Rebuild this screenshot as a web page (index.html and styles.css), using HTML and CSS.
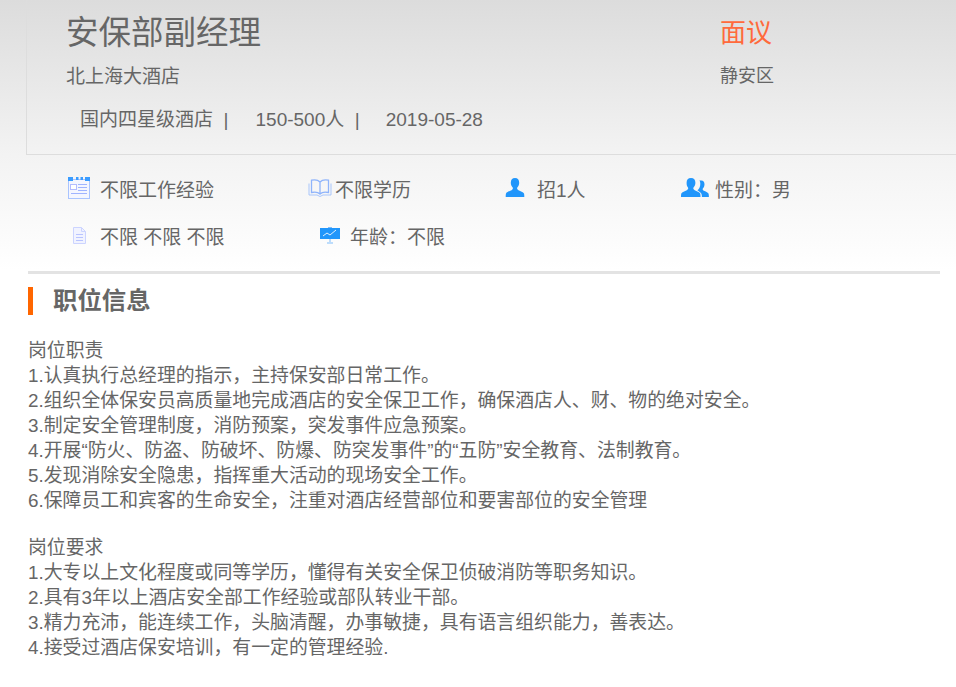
FILE: index.html
```html
<!DOCTYPE html>
<html lang="zh-CN">
<head>
<meta charset="utf-8">
<title>安保部副经理</title>
<link rel="stylesheet" href="styles.css">
</head>
<body>
<div class="page">
  <header class="head">
    <div class="head-main">
      <h1 class="title">安保部副经理</h1>
      <div class="company">北上海大酒店</div>
      <div class="meta"><span class="meta-a">国内四星级酒店&nbsp; |</span><span class="meta-b">150-500人&nbsp; |</span><span class="meta-c">2019-05-28</span></div>
    </div>
    <div class="head-side">
      <div class="salary">面议</div>
      <div class="area">静安区</div>
    </div>
  </header>
  <section class="facts">
    <div class="fact-row first">
      <div class="fact f1">
        <svg class="ic" width="24" height="24" viewBox="0 0 24 24"><rect x="1.500" y="3.500" width="21" height="19" fill="#f4f6ff" stroke="#a9c4ff"/><path d="M1 1h5v4H1zM9 1h2.500v3H9zM13.500 1H16v3h-2.500zM18 1h5v4h-5z" fill="#3a9cff"/><rect x="3.500" y="8.500" width="6" height="5" fill="#fff" stroke="#b4bcff"/><path d="M11 8.500h9M11 11.500h9M11 14.500h9M4 17.500h16" stroke="#9fb4ff" fill="none"/></svg>
        <span class="t1">不限工作经验</span>
      </div>
      <div class="fact f2">
        <svg class="ic" width="24" height="20" viewBox="0 0 24 20"><path d="M12 4C10 1.800 6.500 1.500 3.500 2.200V14.500c3-.7 6.500-.5 8.500 1.500 2-2 5.500-2.200 8.500-1.500V2.200C17.500 1.500 14 1.800 12 4zM12 4v12" fill="none" stroke="#8fb4fb" stroke-width="1.300"/><path d="M1 5.500v11.500h8l3 1.500 3-1.500h8V5.500" fill="none" stroke="#a9c6fb"/></svg>
        <span class="t2">不限学历</span>
      </div>
      <div class="fact f3">
        <svg class="ic" width="20" height="20" viewBox="0 0 20 20"><path d="M10 0c2.800 0 4.200 2 4.200 4.800 0 2-.8 3.600-1.900 4.800-.5 1 0 2 1.200 2.600 2 .8 4.700 1.800 5.500 3.200.3.800.3 2 .3 3.600H.7c0-1.600 0-2.800.3-3.600.8-1.400 3.500-2.400 5.500-3.200 1.200-.6 1.700-1.600 1.200-2.600-1.100-1.200-1.900-2.800-1.900-4.800C5.800 2 7.200 0 10 0z" fill="#2196fb"/></svg>
        <span class="t3">招1人</span>
      </div>
      <div class="fact f4">
        <svg class="ic" width="29" height="20" viewBox="0 0 29 20"><path d="M19.500 2.500c2.500-.5 4 1.200 4 3.700 0 1.800-.7 3.300-1.700 4.300-.4.900 0 1.700 1 2.200 1.800.8 4 1.500 4.700 2.700.3.800.4 2 .4 3.600h-7c0-2.600-.5-4-2.500-5.200l-2-1.500c1.700-1.400 2.900-3 2.900-6.500 0-1.300-.2-2.300-.8-3.500z" fill="#2196fb"/><path d="M10 0c3 0 4.400 2 4.400 4.800 0 2-.8 3.600-1.900 4.800-.5 1 0 2 1.200 2.600 2 .8 4.700 1.800 5.500 3.200.3.800.3 2 .3 3.600H0c0-1.600 0-2.800.3-3.600.8-1.400 3.500-2.400 5.500-3.200 1.200-.6 1.700-1.600 1.200-2.600C5.900 8.400 5.600 6.800 5.600 4.800 5.600 2 7 0 10 0z" fill="#2196fb"/></svg>
        <span class="t4">性别：男</span>
      </div>
    </div>
    <div class="fact-row">
      <div class="fact f5">
        <svg class="ic" width="15" height="17" viewBox="0 0 15 17"><path d="M1.500.5h8l4 4v12h-12z" fill="#f1f3ff" stroke="#ccd4ff"/><path d="M9.500.5v4h4" fill="none" stroke="#ccd4ff"/><path d="M4 7.500h7M4 10.500h7M4 13.500h7" stroke="#b9c4ff" fill="none"/></svg>
        <span class="t5">不限 不限 不限</span>
      </div>
      <div class="fact f6">
        <svg class="ic" width="20" height="18" viewBox="0 0 20 18"><rect y="2" width="20" height="11" fill="#2196fb"/><path d="M8 1h4v1H8z" fill="#7fbdfb"/><path d="M3 10l4-3 3 2 6-5" fill="none" stroke="#dff0ff"/><path d="M10 13v3M7 17h6" stroke="#7fbdfb" fill="none"/></svg>
        <span class="t6">年龄：不限</span>
      </div>
    </div>
  </section>
  <section class="detail">
    <h2 class="sec-title">职位信息</h2>
    <div class="desc">
      <p>岗位职责</p>
      <p>1.认真执行总经理的指示，主持保安部日常工作。</p>
      <p>2.组织全体保安员高质量地完成酒店的安全保卫工作，确保酒店人、财、物的绝对安全。</p>
      <p>3.制定安全管理制度，消防预案，突发事件应急预案。</p>
      <p>4.开展“防火、防盗、防破坏、防爆、防突发事件”的“五防”安全教育、法制教育。</p>
      <p>5.发现消除安全隐患，指挥重大活动的现场安全工作。</p>
      <p>6.保障员工和宾客的生命安全，注重对酒店经营部位和要害部位的安全管理</p>
      <p class="blank">&nbsp;</p>
      <p>岗位要求</p>
      <p>1.大专以上文化程度或同等学历，懂得有关安全保卫侦破消防等职务知识。</p>
      <p>2.具有3年以上酒店安全部工作经验或部队转业干部。</p>
      <p>3.精力充沛，能连续工作，头脑清醒，办事敏捷，具有语言组织能力，善表达。</p>
      <p>4.接受过酒店保安培训，有一定的管理经验.</p>
    </div>
  </section>
</div>
</body>
</html>
```
FILE: styles.css
```css
* { box-sizing: border-box; }
html, body { margin: 0; padding: 0; }
body {
  width: 956px;
  height: 687px;
  overflow: hidden;
  background: #fff;
  color: #666;
  font-family: "Liberation Sans", "Noto Sans CJK SC", sans-serif;
  font-size: 19px;
}
.page {
  background: linear-gradient(to bottom, #dcdcdc 0, #f3f3f3 155px, #fff 270px, #fff 100%);
  height: 687px;
}
.head {
  margin-left: 26px;
  height: 155px;
  border-left: 1px solid #ddd;
  border-bottom: 1px solid #ddd;
  display: flex;
}
.head-main { width: 693px; padding-left: 39px; }
.title { margin: 0; padding-top: 14px; height: 58px; font-size: 32.5px; line-height: 38px; font-weight: 400; color: #666; }
.company { margin-top: 7px; line-height: 24px; font-size: 19px; }
.meta { margin-top: 19px; padding-left: 14px; line-height: 24px; font-size: 19px; white-space: nowrap; }
.meta-b { margin-left: 27px; }
.meta-c { margin-left: 26px; }
.salary { padding-top: 18px; height: 58px; font-size: 26px; line-height: 30px; color: #ff6a3c; }
.area { margin-top: 6px; line-height: 24px; font-size: 18px; }
.facts { height: 116px; padding-top: 18px; }
.fact-row { display: flex; height: 30px; align-items: center; }
.fact-row + .fact-row { margin-top: 17px; }
.fact { display: flex; align-items: center; white-space: nowrap; }
.ic { flex: none; display: block; }
.f1 { margin-left: 67px; width: 241px; }
.t1 { margin-left: 9px; }
.f2 { width: 197px; }
.t2 { margin-left: 3px; }
.f3 { width: 176px; }
.t3 { margin-left: 12px; }
.t4 { margin-left: 5px; }
.f5 { margin-left: 72px; width: 248px; }
.t5 { margin-left: 13px; }
.t6 { margin-left: 10px; }
.detail { margin: 0 16px 0 28px; border-top: 3px solid #e3e3e3; padding-top: 13px; }
.sec-title {
  margin: 0;
  height: 28px;
  border-left: 5px solid #ff6600;
  padding-left: 20px;
  font-size: 24.4px;
  line-height: 28px;
  font-weight: 700;
  color: #666;
}
.desc { margin-top: 23px; font-size: 18.87px; white-space: nowrap; }
.desc p { margin: 0; height: 25px; line-height: 25px; }
.desc .blank { height: 22px; }
```
